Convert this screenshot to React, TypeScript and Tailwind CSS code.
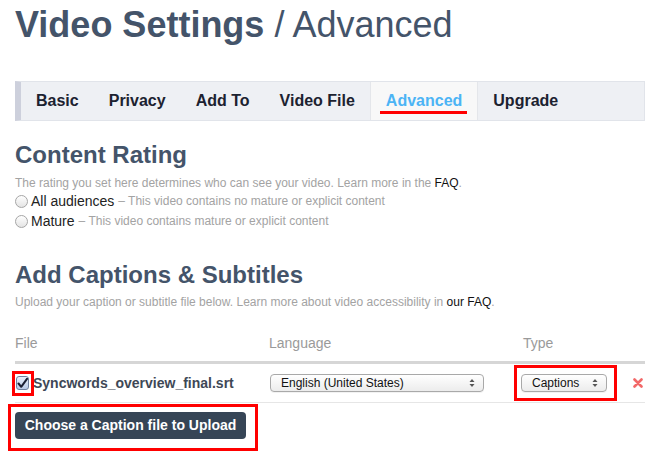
import React from "react";

const tabs = ["Basic", "Privacy", "Add To", "Video File", "Advanced", "Upgrade"];

function Arrows() {
  return (
    <svg width="6" height="10" viewBox="0 0 6 10" className="shrink-0">
      <path d="M3 1 L5.5 4 L0.5 4 Z" fill="#555" />
      <path d="M3 9 L5.5 6 L0.5 6 Z" fill="#555" />
    </svg>
  );
}

function FakeSelect({ label, width }: { label: string; width: string }) {
  return (
    <div
      className={`${width} h-[18px] flex items-center justify-between pl-[10px] pr-[8px] rounded-[4px] border border-[#a9a9a9] bg-gradient-to-b from-white to-[#ececec] text-[12px] text-[#111] shadow-[0_1px_0_rgba(0,0,0,0.05)]`}
    >
      <span className="leading-none">{label}</span>
      <Arrows />
    </div>
  );
}

function Radio({ strong, rest }: { strong: string; rest: string }) {
  return (
    <label className="flex items-center h-[20px]">
      <span className="w-[13px] h-[13px] rounded-full border border-[#a6a6a6] bg-gradient-to-b from-white to-[#e4e4e4] shrink-0" />
      <span className="ml-[3px] text-[14px] text-[#222]">{strong}</span>
      <span className="ml-[4px] text-[12px] text-[#a3a3a3]">– {rest}</span>
    </label>
  );
}

export default function App() {
  return (
    <div className="w-[663px] h-[462px] overflow-hidden bg-white font-['Liberation_Sans',Arial,sans-serif] pl-[15px] pr-[18px] pt-[7px]">
      {/* Title */}
      <h1 className="text-[36px] leading-[36px] text-[#44546a] whitespace-nowrap">
        <span className="font-bold">Video Settings</span>
        <span className="font-normal"> / Advanced</span>
      </h1>

      {/* Tabs */}
      <nav className="mt-[38px] flex h-[40px] bg-[#eef0f4] border border-[#e1e4ea] border-l-[6px] border-l-[#cdd0dc]">
        {tabs.map((t) =>
          t === "Advanced" ? (
            <div
              key={t}
              className="relative flex items-center px-[15px] bg-[#f8f8f8] border-x border-[#e4e6ea] text-[16px] font-bold text-[#4cb4f5]"
            >
              {t}
              <span className="absolute left-[9px] right-[10px] bottom-[6px] h-[3px] bg-[#ff0000]" />
            </div>
          ) : (
            <div key={t} className="flex items-center px-[15px] text-[16px] font-bold text-[#1c2230]">
              {t}
            </div>
          )
        )}
      </nav>

      {/* Content Rating */}
      <h2 className="mt-[20px] text-[24px] leading-[28px] font-bold text-[#44546a]">Content Rating</h2>
      <p className="mt-[6px] text-[12px] leading-[16px] text-[#a3a3a3]">
        The rating you set here determines who can see your video. Learn more in the{" "}
        <span className="text-[#111]">FAQ</span>.
      </p>
      <Radio strong="All audiences" rest="This video contains no mature or explicit content" />
      <Radio strong="Mature" rest="This video contains mature or explicit content" />

      {/* Captions */}
      <h2 className="mt-[30px] text-[24px] leading-[28px] font-bold text-[#44546a]">Add Captions &amp; Subtitles</h2>
      <p className="mt-[5px] text-[12px] leading-[16px] text-[#a3a3a3]">
        Upload your caption or subtitle file below. Learn more about video accessibility in{" "}
        <span className="text-[#111]">our FAQ</span>.
      </p>

      <div className="mt-[16px]">
        <div className="flex items-end h-[38px] pb-[10px] border-b-[3px] border-[#d6d6d6] text-[14px] leading-[16px] text-[#9a9a9a]">
          <div className="w-[254px] shrink-0">File</div>
          <div className="w-[254px] shrink-0">Language</div>
          <div>Type</div>
        </div>
        <div className="flex items-center h-[39px] border-b border-[#e6e6e6]">
          <div className="w-[254px] shrink-0 flex items-center">
            <div className="relative ml-[1px]">
              <div className="w-[13px] h-[14px] rounded-[3px] border border-[#6f7f9e] bg-gradient-to-b from-[#e9f0fb] to-[#b9c9e6] flex items-center justify-center">
                <svg width="11" height="11" viewBox="0 0 11 11">
                  <path d="M1.5 5.5 L4.2 8.8 L10 0.8" fill="none" stroke="#1b1f33" strokeWidth="2" strokeLinecap="round" strokeLinejoin="round" />
                </svg>
              </div>
              <span className="absolute -left-[4px] -top-[5px] w-[22px] h-[25px] border-[3px] border-[#ff0000]" />
            </div>
            <span className="ml-[4px] text-[14px] font-bold text-[#3e4856]">Syncwords_overview_final.srt</span>
          </div>
          <div className="w-[254px] shrink-0">
            <div className="ml-[1px]">
              <FakeSelect label="English (United States)" width="w-[214px]" />
            </div>
          </div>
          <div className="relative w-[110px] shrink-0">
            <div className="-ml-[2px]">
              <FakeSelect label="Captions" width="w-[86px]" />
            </div>
            <span className="absolute -left-[9px] -top-[9px] w-[103px] h-[36px] border-[3px] border-[#ff0000]" />
          </div>
          <svg width="10" height="10" viewBox="0 0 10 10" className="shrink-0">
            <path d="M1.5 1.5 L8.5 8.5 M8.5 1.5 L1.5 8.5" stroke="#f26868" strokeWidth="2.6" strokeLinecap="round" />
          </svg>
        </div>

        <div className="relative mt-[9px] inline-block">
          <button className="w-[231px] h-[27px] rounded-[4px] bg-[#364556] text-white text-[14px] font-bold">
            Choose a Caption file to Upload
          </button>
          <span className="absolute -left-[7px] -top-[8px] -right-[12px] -bottom-[12px] border-[3px] border-[#ff0000]" />
        </div>
      </div>
    </div>
  );
}
